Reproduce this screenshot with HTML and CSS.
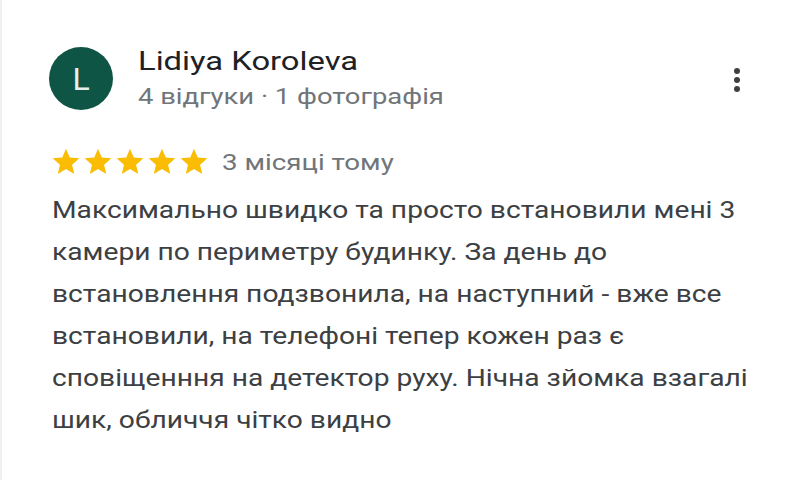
FILE: index.html
```html
<!DOCTYPE html>
<html lang="uk">
<head>
<meta charset="utf-8">
<title>Відгук</title>
<link rel="stylesheet" href="styles.css">
</head>
<body>
<div class="card">
  <div class="header">
    <div class="avatar">L</div>
    <div class="meta">
      <div class="name"><span class="wide">Lidiya Koroleva</span></div>
      <div class="sub"><span class="wide">4 відгуки · 1 фотографія</span></div>
    </div>
    <div class="menu">
      <svg width="36" height="36" viewBox="0 0 36 36"><circle cx="18" cy="9" r="3"/><circle cx="18" cy="18" r="3"/><circle cx="18" cy="27" r="3"/></svg>
    </div>
  </div>
  <div class="rating">
    <div class="stars">
      <svg class="star" viewBox="0 0 24 24"><path d="M12 17.27L18.18 21l-1.64-7.03L22 9.24l-7.19-.61L12 2 9.19 8.63 2 9.24l5.46 4.73L5.82 21z"/></svg>
      <svg class="star" viewBox="0 0 24 24"><path d="M12 17.27L18.18 21l-1.64-7.03L22 9.24l-7.19-.61L12 2 9.19 8.63 2 9.24l5.46 4.73L5.82 21z"/></svg>
      <svg class="star" viewBox="0 0 24 24"><path d="M12 17.27L18.18 21l-1.64-7.03L22 9.24l-7.19-.61L12 2 9.19 8.63 2 9.24l5.46 4.73L5.82 21z"/></svg>
      <svg class="star" viewBox="0 0 24 24"><path d="M12 17.27L18.18 21l-1.64-7.03L22 9.24l-7.19-.61L12 2 9.19 8.63 2 9.24l5.46 4.73L5.82 21z"/></svg>
      <svg class="star" viewBox="0 0 24 24"><path d="M12 17.27L18.18 21l-1.64-7.03L22 9.24l-7.19-.61L12 2 9.19 8.63 2 9.24l5.46 4.73L5.82 21z"/></svg>
    </div>
    <span class="date wide">3 місяці тому</span>
  </div>
  <p class="text">Максимально швидко та просто встановили мені 3 камери по периметру будинку. За день до встановлення подзвонила, на наступний - вже все встановили, на телефоні тепер кожен раз є сповіщенння на детектор руху. Нічна зйомка взагалі шик, обличчя чітко видно</p>
</div>
</body>
</html>
```
FILE: styles.css
```css
html, body {
  margin: 0;
  padding: 0;
  background: #ffffff;
}
body {
  font-family: Roboto, "Noto Sans", Arial, sans-serif;
}
.card {
  box-sizing: border-box;
  width: 800px;
  height: 480px;
  padding: 46px 0 0 48px;
  border-left: 2px solid #eef1f4;
}
.wide {
  display: inline-block;
  transform: scaleX(1.26);
  transform-origin: left center;
  white-space: nowrap;
}
.header {
  display: flex;
  align-items: flex-start;
}
.avatar {
  width: 64px;
  height: 63px;
  margin-top: 1px;
  margin-left: -1px;
  border-radius: 50%;
  background: #0e5546;
  color: #e6efeb;
  display: flex;
  align-items: center;
  justify-content: center;
  font-size: 32px;
  flex-shrink: 0;
}
.meta {
  margin-left: 25px;
}
.name {
  font-size: 26px;
  line-height: 30px;
  color: #202124;
}
.sub {
  margin-top: 6px;
  font-size: 22px;
  line-height: 30px;
  color: #70757a;
}
.sub .wide {
  transform: scaleX(1.245);
}
.menu {
  margin-left: auto;
  margin-right: 45px;
  margin-top: 16px;
  width: 36px;
  height: 36px;
}
.menu svg {
  display: block;
  fill: #3c4043;
}
.rating {
  display: flex;
  align-items: center;
  margin-top: 34px;
  height: 32px;
}
.stars {
  display: flex;
}
.star {
  display: block;
  width: 32px;
  height: 32px;
  fill: #fbbc04;
}
.date {
  margin-left: 12px;
  font-size: 22px;
  color: #70757a;
}
.text {
  margin: 12px 0 0 2px;
  width: 575px;
  font-size: 23px;
  line-height: 42px;
  color: #3c4043;
  transform: scaleX(1.225);
  transform-origin: left top;
}
```
